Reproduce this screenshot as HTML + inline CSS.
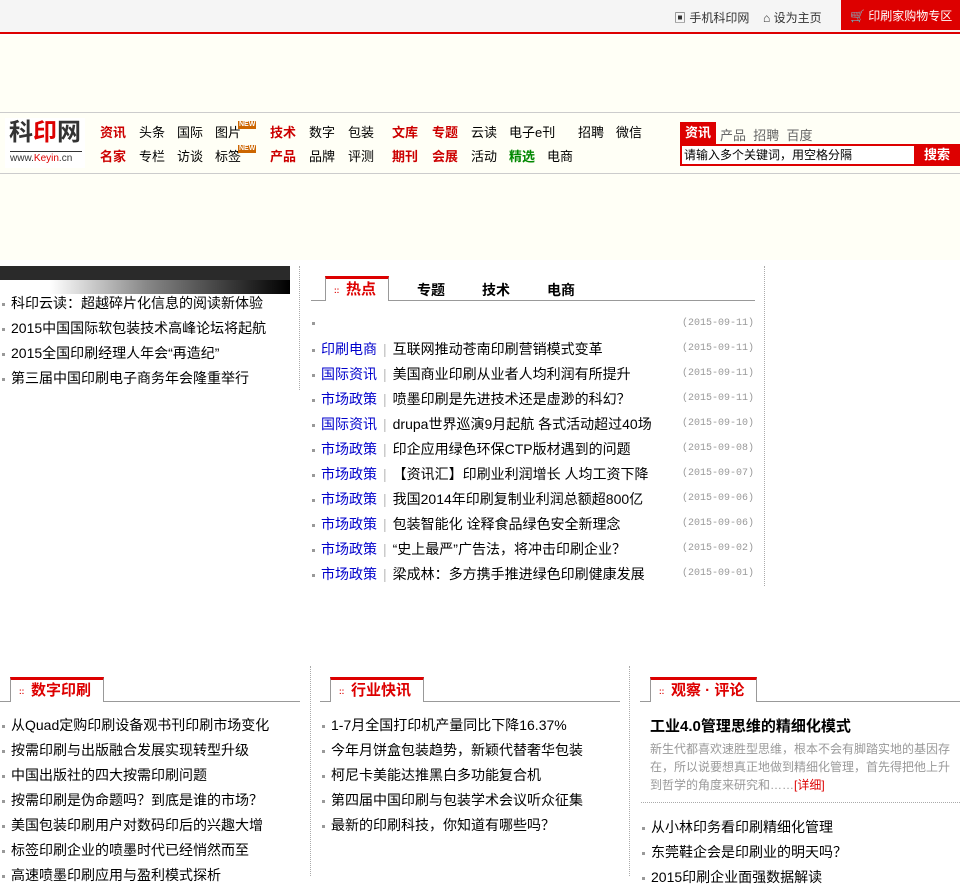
<!DOCTYPE html>
<html><head><meta charset="utf-8"><style>
*{margin:0;padding:0;box-sizing:border-box}
body{width:960px;height:873px;overflow:hidden;background:#fff;font-family:"Liberation Sans","Noto Sans CJK SC","WenQuanYi Zen Hei",sans-serif;font-size:13px;color:#000;position:relative}
.a{position:absolute;white-space:nowrap}
.r{color:#c00;font-weight:bold}
.li{position:absolute;font-size:14px;white-space:nowrap}
.li:before{content:"";display:inline-block;width:3px;height:3px;background:#999;margin-right:6px;vertical-align:middle}
.blue{color:#00c}
.sep{color:#bbb;margin:0 6px}
.date{position:absolute;right:0;font-family:"Liberation Mono",monospace;font-size:10px;color:#999}
.tab{position:absolute;height:25px;border:1px solid #999;border-bottom:none;border-top:3px solid #d00;background:#fff;color:#d00;font-size:15px;font-weight:bold;padding:0 12px 0 20px;line-height:21px}
.tab:before{content:"::";position:absolute;left:8px;top:1px;font-size:8px;color:#d00}
.new{position:absolute;font-size:7px;font-weight:bold;color:#fff;background:#c60;padding:0 1px;line-height:8px}
</style></head><body>
<div class="a" style="left:0;top:0;width:960px;height:32px;background:#f5f5f5"></div>
<div class="a" style="left:0;top:32px;width:960px;height:2px;background:#d00"></div>
<div class="a" style="left:674px;top:9px;font-size:12px;color:#333">▣ 手机科印网</div>
<div class="a" style="left:763px;top:9px;font-size:12px;color:#333">⌂ 设为主页</div>
<div class="a" style="left:841px;top:0;width:119px;height:30px;background:#d00;color:#fff;font-size:12px;line-height:32px;padding-left:9px">🛒 印刷家购物专区</div>
<div class="a" style="left:0;top:36px;width:960px;height:224px;background:#fffff6"></div>
<div class="a" style="left:0;top:112px;width:960px;height:1px;background:#ccc"></div>
<div class="a" style="left:0;top:173px;width:960px;height:1px;background:#ccc"></div>
<div class="a" style="left:5px;top:118px;width:80px;height:50px;background:#fff"></div>
<div class="a" style="left:9px;top:118px;font-size:24px;line-height:30px;font-weight:bold;color:#333">科<span style="color:#d00">印</span>网</div>
<div class="a" style="left:10px;top:151px;width:72px;height:1px;background:#333"></div>
<div class="a" style="left:10px;top:153px;font-size:10px;color:#333">www.<span style="color:#d00">Keyin</span>.cn</div>
<div class="a" style="left:100px;top:125px;line-height:16px">
<span class="a r" style="left:0">资讯</span><span class="a" style="left:39px">头条</span><span class="a" style="left:77px">国际</span><span class="a" style="left:115px">图片</span><span class="new" style="left:138px;top:-4px">NEW</span><span class="a r" style="left:170px">技术</span><span class="a" style="left:209px">数字</span><span class="a" style="left:248px">包装</span><span class="a r" style="left:292px">文库</span><span class="a r" style="left:332px">专题</span><span class="a" style="left:371px">云读</span><span class="a" style="left:409px">电子e刊</span><span class="a" style="left:478px">招聘</span><span class="a" style="left:516px">微信</span></div>
<div class="a" style="left:100px;top:149px;line-height:16px">
<span class="a r" style="left:0">名家</span><span class="a" style="left:39px">专栏</span><span class="a" style="left:77px">访谈</span><span class="a" style="left:115px">标签</span><span class="new" style="left:138px;top:-4px">NEW</span><span class="a r" style="left:170px">产品</span><span class="a" style="left:209px">品牌</span><span class="a" style="left:248px">评测</span><span class="a r" style="left:292px">期刊</span><span class="a r" style="left:332px">会展</span><span class="a" style="left:371px">活动</span><span class="a" style="left:409px;color:#080;font-weight:bold">精选</span><span class="a" style="left:447px">电商</span></div>
<div class="a" style="left:680px;top:122px;width:36px;height:23px;background:#d00;color:#fff;font-weight:bold;line-height:22px;text-align:center">资讯</div>
<div class="a" style="left:720px;top:125px;color:#666">产品&nbsp; 招聘&nbsp; 百度</div>
<div class="a" style="left:680px;top:144px;width:280px;height:22px;border:2px solid #d00;background:#fff;font-size:12px;line-height:18px;padding-left:2px">请输入多个关键词，用空格分隔</div>
<div class="a" style="left:914px;top:144px;width:46px;height:22px;background:#d00;color:#fff;font-weight:bold;line-height:22px;text-align:center">搜索</div>

<div class="a" style="left:0;top:266px;width:290px;height:14px;background:#2a2a2a"></div>
<div class="a" style="left:50px;top:280px;width:240px;height:14px;background:linear-gradient(90deg,#fff,#888 40%,#000)"></div>
<div class="a" style="left:299px;top:266px;height:124px;border-left:1px dotted #aaa"></div>
<div class="li" style="left:2px;top:293px">科印云读：超越碎片化信息的阅读新体验</div>
<div class="li" style="left:2px;top:318px">2015中国国际软包装技术高峰论坛将起航</div>
<div class="li" style="left:2px;top:343px">2015全国印刷经理人年会“再造纪”</div>
<div class="li" style="left:2px;top:368px">第三届中国印刷电子商务年会隆重举行</div>

<div class="a" style="left:764px;top:266px;height:320px;border-left:1px dotted #aaa"></div>
<div class="a" style="left:311px;top:300px;width:444px;height:1px;background:#999"></div>
<div class="tab" style="left:325px;top:276px">热点</div>
<div class="a" style="left:417px;top:280px;font-size:14px;font-weight:bold">专题</div>
<div class="a" style="left:482px;top:280px;font-size:14px;font-weight:bold">技术</div>
<div class="a" style="left:547px;top:280px;font-size:14px;font-weight:bold">电商</div>
<div class="a" style="left:312px;top:314px;width:442px;height:280px">
<div class="li" style="left:0;top:0">&nbsp;</div><span class="date" style="top:4px">(2015-09-11)</span>
<div class="li" style="left:0;top:25px"><span class="blue">印刷电商</span><span class="sep">|</span>互联网推动苍南印刷营销模式变革</div><span class="date" style="top:29px">(2015-09-11)</span>
<div class="li" style="left:0;top:50px"><span class="blue">国际资讯</span><span class="sep">|</span>美国商业印刷从业者人均利润有所提升</div><span class="date" style="top:54px">(2015-09-11)</span>
<div class="li" style="left:0;top:75px"><span class="blue">市场政策</span><span class="sep">|</span>喷墨印刷是先进技术还是虚渺的科幻？</div><span class="date" style="top:79px">(2015-09-11)</span>
<div class="li" style="left:0;top:100px"><span class="blue">国际资讯</span><span class="sep">|</span>drupa世界巡演9月起航 各式活动超过40场</div><span class="date" style="top:104px">(2015-09-10)</span>
<div class="li" style="left:0;top:125px"><span class="blue">市场政策</span><span class="sep">|</span>印企应用绿色环保CTP版材遇到的问题</div><span class="date" style="top:129px">(2015-09-08)</span>
<div class="li" style="left:0;top:150px"><span class="blue">市场政策</span><span class="sep">|</span>【资讯汇】印刷业利润增长 人均工资下降</div><span class="date" style="top:154px">(2015-09-07)</span>
<div class="li" style="left:0;top:175px"><span class="blue">市场政策</span><span class="sep">|</span>我国2014年印刷复制业利润总额超800亿</div><span class="date" style="top:179px">(2015-09-06)</span>
<div class="li" style="left:0;top:200px"><span class="blue">市场政策</span><span class="sep">|</span>包装智能化 诠释食品绿色安全新理念</div><span class="date" style="top:204px">(2015-09-06)</span>
<div class="li" style="left:0;top:225px"><span class="blue">市场政策</span><span class="sep">|</span>“史上最严”广告法，将冲击印刷企业？</div><span class="date" style="top:229px">(2015-09-02)</span>
<div class="li" style="left:0;top:250px"><span class="blue">市场政策</span><span class="sep">|</span>梁成林：多方携手推进绿色印刷健康发展</div><span class="date" style="top:254px">(2015-09-01)</span>
</div>

<div class="a" style="left:310px;top:666px;height:210px;border-left:1px dotted #aaa"></div>
<div class="a" style="left:629px;top:666px;height:210px;border-left:1px dotted #aaa"></div>
<div class="a" style="left:0;top:701px;width:300px;height:1px;background:#999"></div>
<div class="a" style="left:320px;top:701px;width:300px;height:1px;background:#999"></div>
<div class="a" style="left:640px;top:701px;width:320px;height:1px;background:#999"></div>
<div class="tab" style="left:10px;top:677px">数字印刷</div>
<div class="tab" style="left:330px;top:677px">行业快讯</div>
<div class="tab" style="left:650px;top:677px">观察 · 评论</div>
<div class="li" style="left:2px;top:715px">从Quad定购印刷设备观书刊印刷市场变化</div>
<div class="li" style="left:2px;top:740px">按需印刷与出版融合发展实现转型升级</div>
<div class="li" style="left:2px;top:765px">中国出版社的四大按需印刷问题</div>
<div class="li" style="left:2px;top:790px">按需印刷是伪命题吗？到底是谁的市场？</div>
<div class="li" style="left:2px;top:815px">美国包装印刷用户对数码印后的兴趣大增</div>
<div class="li" style="left:2px;top:840px">标签印刷企业的喷墨时代已经悄然而至</div>
<div class="li" style="left:2px;top:865px">高速喷墨印刷应用与盈利模式探析</div>
<div class="li" style="left:322px;top:715px">1-7月全国打印机产量同比下降16.37%</div>
<div class="li" style="left:322px;top:740px">今年月饼盒包装趋势，新颖代替奢华包装</div>
<div class="li" style="left:322px;top:765px">柯尼卡美能达推黑白多功能复合机</div>
<div class="li" style="left:322px;top:790px">第四届中国印刷与包装学术会议听众征集</div>
<div class="li" style="left:322px;top:815px">最新的印刷科技，你知道有哪些吗？</div>
<div class="a" style="left:650px;top:715px;font-size:15px;font-weight:bold">工业4.0管理思维的精细化模式</div>
<div class="a" style="left:650px;top:740px;width:305px;white-space:normal;font-size:12px;line-height:18px;color:#999">新生代都喜欢速胜型思维，根本不会有脚踏实地的基因存在，所以说要想真正地做到精细化管理，首先得把他上升到哲学的角度来研究和……<span style="color:#d00">[详细]</span></div>
<div class="a" style="left:641px;top:802px;width:319px;border-top:1px dotted #aaa"></div>
<div class="li" style="left:642px;top:817px">从小林印务看印刷精细化管理</div>
<div class="li" style="left:642px;top:842px">东莞鞋企会是印刷业的明天吗？</div>
<div class="li" style="left:642px;top:867px">2015印刷企业面强数据解读</div>
</body></html>
